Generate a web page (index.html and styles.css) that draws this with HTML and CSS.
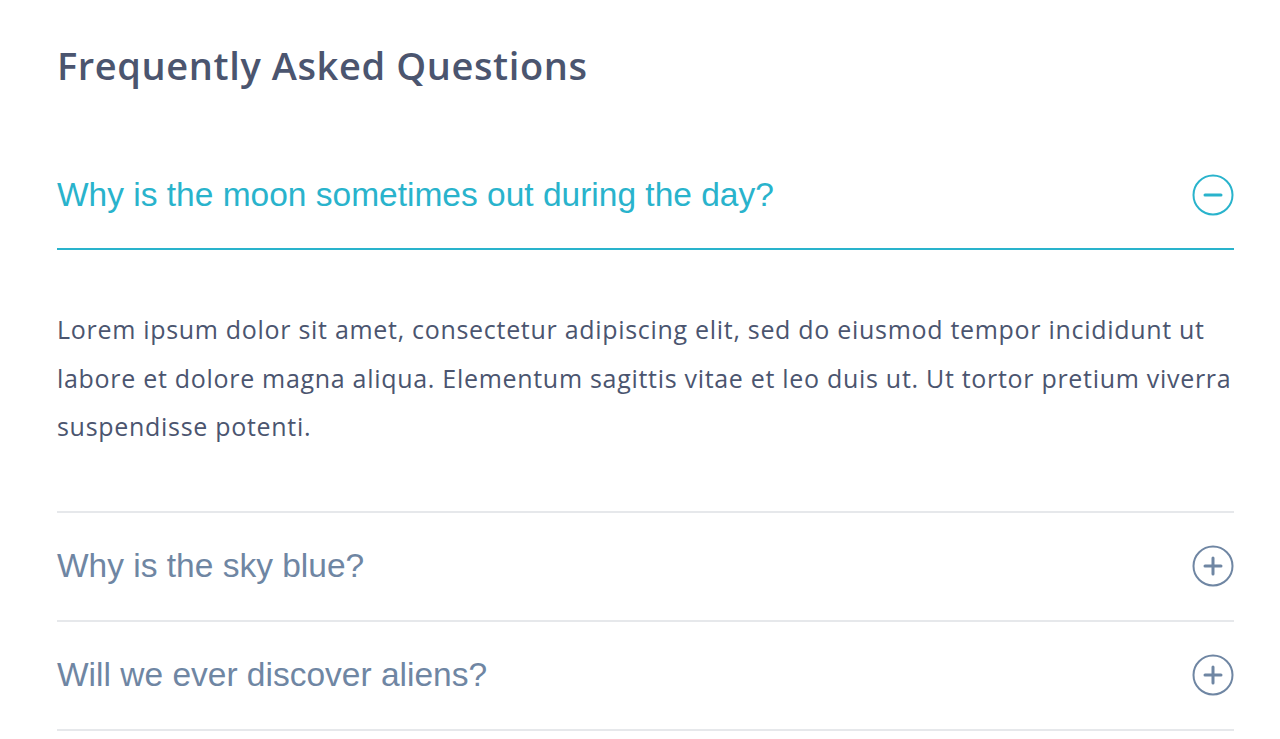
FILE: index.html
```html
<!DOCTYPE html>
<html>
<head>
<meta charset="utf-8">
<link rel="stylesheet" href="styles.css">
</head>
<body>
<section class="faq">
  <h1 class="faq-title">Frequently Asked Questions</h1>
  <div class="item open">
    <div class="question">
      <span class="q-text">Why is the moon sometimes out during the day?</span>
      <svg class="icon" viewBox="0 0 42 42" width="42" height="42"><circle cx="21" cy="21" r="19.5" fill="none" stroke="currentColor" stroke-width="2"/><line x1="13" y1="21" x2="29" y2="21" stroke="currentColor" stroke-width="3" stroke-linecap="round"/></svg>
    </div>
    <p class="answer">Lorem ipsum dolor sit amet, consectetur adipiscing elit, sed do eiusmod tempor incididunt ut labore et dolore magna aliqua. Elementum sagittis vitae et leo duis ut. Ut tortor pretium viverra suspendisse potenti.</p>
  </div>
  <div class="item">
    <div class="question">
      <span class="q-text">Why is the sky blue?</span>
      <svg class="icon" viewBox="0 0 42 42" width="42" height="42"><circle cx="21" cy="21" r="19.5" fill="none" stroke="currentColor" stroke-width="2"/><line x1="13" y1="21" x2="29" y2="21" stroke="currentColor" stroke-width="3" stroke-linecap="round"/><line x1="21" y1="13" x2="21" y2="29" stroke="currentColor" stroke-width="3" stroke-linecap="round"/></svg>
    </div>
  </div>
  <div class="item">
    <div class="question">
      <span class="q-text">Will we ever discover aliens?</span>
      <svg class="icon" viewBox="0 0 42 42" width="42" height="42"><circle cx="21" cy="21" r="19.5" fill="none" stroke="currentColor" stroke-width="2"/><line x1="13" y1="21" x2="29" y2="21" stroke="currentColor" stroke-width="3" stroke-linecap="round"/><line x1="21" y1="13" x2="21" y2="29" stroke="currentColor" stroke-width="3" stroke-linecap="round"/></svg>
    </div>
  </div>
</section>
</body>
</html>
```
FILE: styles.css
```css
html, body {
  margin: 0;
  padding: 0;
  background: #ffffff;
}
.faq {
  width: 1177px;
  margin-left: 57px;
  padding-top: 35px;
}
.faq-title {
  margin: 0 0 54px 0;
  font-family: "Open Sans", sans-serif;
  font-weight: 600;
  font-size: 38px;
  line-height: 60px;
  color: #4b556f;
  letter-spacing: 0.6px;
}
.item {
  border-bottom: 2px solid #e6e8eb;
}
.question {
  display: flex;
  align-items: center;
  justify-content: space-between;
  height: 107px;
  color: #6f86a3;
}
.item.open .question {
  color: #29b3cc;
  border-bottom: 2px solid #29b3cc;
  height: 107px;
}
.item.open {
  margin-top: -8px;
}
.q-text {
  font-family: "Liberation Sans", Arial, sans-serif;
  font-size: 33.5px;
}
.icon {
  display: block;
  flex: none;
}
.answer {
  margin: 0 -30px 0 0;
  padding: 55px 0 60px 0;
  font-family: "Open Sans", sans-serif;
  font-size: 25px;
  line-height: 48.5px;
  letter-spacing: 0.7px;
  color: #4b556f;
}
```
